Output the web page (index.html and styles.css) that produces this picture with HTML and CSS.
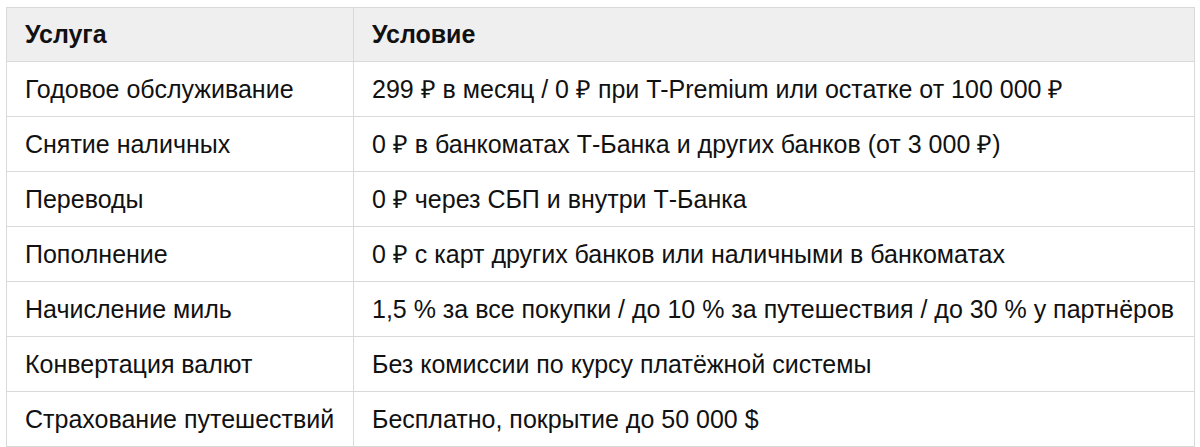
FILE: index.html
```html
<!DOCTYPE html>
<html lang="ru">
<head>
<meta charset="utf-8">
<link rel="stylesheet" href="styles.css">
</head>
<body>
<table class="tbl">
  <thead>
    <tr><th class="c1">Услуга</th><th>Условие</th></tr>
  </thead>
  <tbody>
    <tr><td>Годовое обслуживание</td><td>299 ₽ в месяц / 0 ₽ при T-Premium или остатке от 100 000 ₽</td></tr>
    <tr><td>Снятие наличных</td><td>0 ₽ в банкоматах Т-Банка и других банков (от 3 000 ₽)</td></tr>
    <tr><td>Переводы</td><td>0 ₽ через СБП и внутри Т-Банка</td></tr>
    <tr><td>Пополнение</td><td>0 ₽ с карт других банков или наличными в банкоматах</td></tr>
    <tr><td>Начисление миль</td><td>1,5 % за все покупки / до 10 % за путешествия / до 30 % у партнёров</td></tr>
    <tr><td>Конвертация валют</td><td>Без комиссии по курсу платёжной системы</td></tr>
    <tr><td>Страхование путешествий</td><td>Бесплатно, покрытие до 50 000 $</td></tr>
  </tbody>
</table>
</body>
</html>
```
FILE: styles.css
```css
html, body {
  margin: 0;
  background: #fff;
}
body {
  padding: 7px 6px;
  font-family: "Liberation Sans", Arial, sans-serif;
  color: #111;
}
.tbl {
  border-collapse: collapse;
  width: 1189px;
  font-size: 25px;
  line-height: 29px;
}
.tbl th, .tbl td {
  border: 1px solid #d9d9d9;
  text-align: left;
  vertical-align: middle;
  padding: 0 18px;
  height: 54px;
}
.tbl th {
  background: #efefef;
  font-weight: bold;
  height: 53px;
}
.tbl .c1 {
  width: 310px;
}
```
